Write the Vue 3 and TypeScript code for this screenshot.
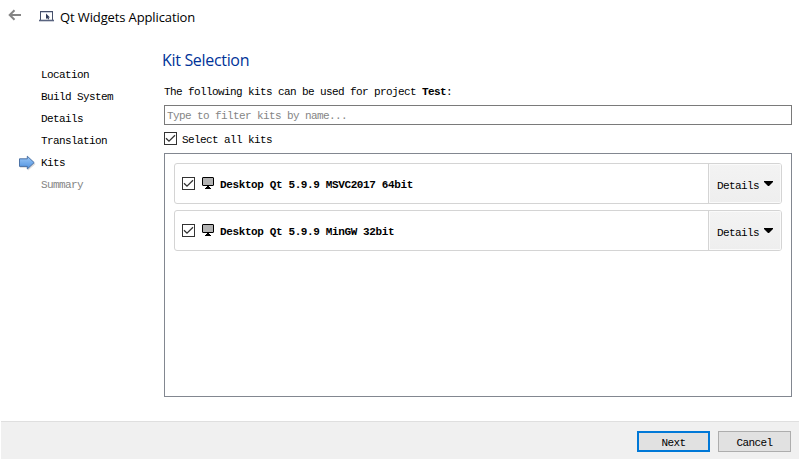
<script setup lang="ts">
import { ref } from 'vue'

interface Kit {
  name: string
  checked: boolean
}

const steps: string[] = ['Location', 'Build System', 'Details', 'Translation', 'Kits', 'Summary']
const current = 4
const filter = ref('')
const allKits = ref(true)
const kits = ref<Kit[]>([
  { name: 'Desktop Qt 5.9.9 MSVC2017 64bit', checked: true },
  { name: 'Desktop Qt 5.9.9 MinGW 32bit', checked: true },
])

function toggleAll(): void {
  allKits.value = !allKits.value
  kits.value.forEach((k) => (k.checked = allKits.value))
}
</script>

<template>
  <div class="wizard">
    <header class="titlebar">
      <svg class="back" width="14" height="12" viewBox="0 0 14 12">
        <path d="M13 6H2M6.5 1.2L1.7 6L6.5 10.8" fill="none" stroke="#858585" stroke-width="2" />
      </svg>
      <svg class="app-icon" width="15" height="12" viewBox="0 0 15 12">
        <path d="M1.5 10V1.5H13.5V10" fill="#fff" stroke="#46506b" />
        <path d="M1 1.5H14" stroke="#46506b" />
        <path d="M2 2.5H13" stroke="#c9cedb" />
        <path d="M0 10.5H15" stroke="#5a6480" stroke-width="1.6" />
        <path d="M7 3.5V9L8.2 8L9.1 9.6L10.2 9L9.4 7.4H11Z" fill="#303a58" />
      </svg>
      <span class="app-name">Qt Widgets Application</span>
    </header>

    <div class="body">
      <nav class="steps">
        <div v-for="(s, i) in steps" :key="s" class="step" :class="{ pending: i > current }">
          <span class="marker">
            <svg v-if="i === current" width="17" height="16" viewBox="0 0 17 16">
              <defs>
                <linearGradient id="arrow" x1="0" y1="0" x2="0" y2="1">
                  <stop offset="0" stop-color="#9cc9f7" />
                  <stop offset="1" stop-color="#4d90e0" />
                </linearGradient>
              </defs>
              <path d="M1 6H9V3L16.5 9L9 15.4V12.8H1Z" fill="#dadada" />
              <path d="M.5 3.8H8.3V1.2L15.2 7.6L8.3 14V11.4H.5Z" fill="url(#arrow)" stroke="#41689d" stroke-width=".9" />
            </svg>
          </span>
          <span>{{ s }}</span>
        </div>
      </nav>

      <main class="content">
        <h1>Kit Selection</h1>
        <p class="intro">The following kits can be used for project <b>Test</b>:</p>
        <input v-model="filter" class="filter" type="text" placeholder="Type to filter kits by name..." />
        <div class="select-all" @click="toggleAll">
          <span class="check">
            <svg v-if="allKits" width="11" height="11" viewBox="0 0 11 11"><path d="M1 5.2L4 8.2L10 2.2" /></svg>
          </span>
          <span class="label">Select all kits</span>
        </div>
        <div class="kit-list">
          <div v-for="kit in kits" :key="kit.name" class="kit">
            <div class="kit-main" @click="kit.checked = !kit.checked">
              <span class="check">
                <svg v-if="kit.checked" width="11" height="11" viewBox="0 0 11 11"><path d="M1 5.2L4 8.2L10 2.2" /></svg>
              </span>
              <svg class="monitor" width="12" height="12" viewBox="0 0 12 12">
                <rect x=".5" y=".5" width="11" height="8" rx=".5" fill="#b3b3b3" stroke="#000" />
                <path d="M5 9H7V10H8V11H9V12H3V11H4V10H5Z" fill="#000" />
              </svg>
              <b>{{ kit.name }}</b>
            </div>
            <button class="details">
              <span>Details</span>
              <svg width="9" height="5" viewBox="0 0 9 5"><path d="M0 0H9V1L5 5H4L0 1Z" /></svg>
            </button>
          </div>
        </div>
      </main>
    </div>

    <footer class="footer">
      <button class="btn primary">Next</button>
      <button class="btn">Cancel</button>
    </footer>
  </div>
</template>

<style>
body {
  margin: 0;
  background: #fff;
}
</style>

<style scoped>
.wizard,
.wizard * {
  box-sizing: border-box;
}
.wizard {
  display: flex;
  flex-direction: column;
  width: 799px;
  height: 459px;
  overflow: hidden;
  background: #fff;
  color: #000;
  font-family: 'Liberation Mono', monospace;
  font-size: 11px;
  letter-spacing: -0.6px;
  line-height: 14px;
  white-space: pre;
}
.titlebar {
  display: flex;
  align-items: center;
  height: 34px;
  padding: 0 0 2px 8px;
  flex: none;
}
.back {
  margin-bottom: 2px;
}
.app-icon {
  margin-left: 17px;
}
.app-name {
  margin-left: 6px;
  font: 13px/18px 'Open Sans', sans-serif;
  letter-spacing: -0.12px;
  padding-top: 1px;
}
.body {
  display: flex;
  flex: 1;
  min-height: 0;
}
.steps {
  width: 164px;
  flex: none;
  padding: 30px 0 0 19px;
}
.step {
  display: flex;
  align-items: center;
  height: 22px;
}
.marker {
  display: flex;
  width: 22px;
}
.pending {
  color: #848484;
}
.content {
  display: flex;
  flex-direction: column;
  width: 628px;
}
h1 {
  margin: 15px 0 0 -2px;
  color: #003399;
  font: 400 16px/22px 'Open Sans', sans-serif;
  letter-spacing: -0.32px;
}
.intro {
  margin: 14px 0 6px;
}
.filter {
  height: 20px;
  padding: 1px 2px 0;
  border: 1px solid #7a7a7a;
  border-radius: 0;
  outline: none;
  background: #fff;
  font: inherit;
  letter-spacing: inherit;
}
.filter::placeholder {
  color: #858585;
  opacity: 1;
}
.select-all {
  display: flex;
  align-items: flex-start;
  gap: 5px;
  height: 14px;
  margin: 7px 0;
}
.label {
  padding-top: 1px;
}
.check {
  display: flex;
  flex: none;
  width: 13px;
  height: 13px;
  border: 1px solid #333;
  background: #fff;
}
.check path {
  fill: none;
  stroke: #333;
  stroke-width: 1.3;
}
.kit-list {
  display: flex;
  flex-direction: column;
  gap: 6px;
  height: 244px;
  padding: 9px;
  border: 1px solid #828790;
}
.kit {
  display: flex;
  height: 41px;
  border: 1px solid #d4d4d4;
  border-radius: 3px;
  overflow: hidden;
}
.kit-main {
  display: flex;
  align-items: center;
  flex: 1;
  padding-left: 7px;
}
.kit-main b {
  margin: 2px 0 0 6px;
  letter-spacing: -0.38px;
}
.monitor {
  margin: 0 0 2px 7px;
}
.details {
  display: flex;
  align-items: center;
  gap: 5px;
  width: 73px;
  padding: 0 0 0 8px;
  border: 0;
  border-left: 1px solid #d4d4d4;
  box-shadow: inset 0 0 0 1px #fafafa;
  background: linear-gradient(#f3f3f3, #eeeeee);
  color: #000;
  font: inherit;
  letter-spacing: inherit;
}
.details span {
  padding-top: 4px;
}
.footer {
  display: flex;
  gap: 8px;
  flex: none;
  height: 38px;
  margin-left: 1px;
  padding: 9px 8px 0 0;
  justify-content: flex-end;
  border-top: 1px solid #dfdfdf;
  background: #f0f0f0;
}
.btn {
  width: 73px;
  height: 21px;
  padding: 2px 0 0;
  border: 1px solid #adadad;
  background: #e1e1e1;
  color: #000;
  font: inherit;
  letter-spacing: inherit;
}
.primary {
  padding: 2px 0 0;
  border: 2px solid #0078d7;
}
</style>
